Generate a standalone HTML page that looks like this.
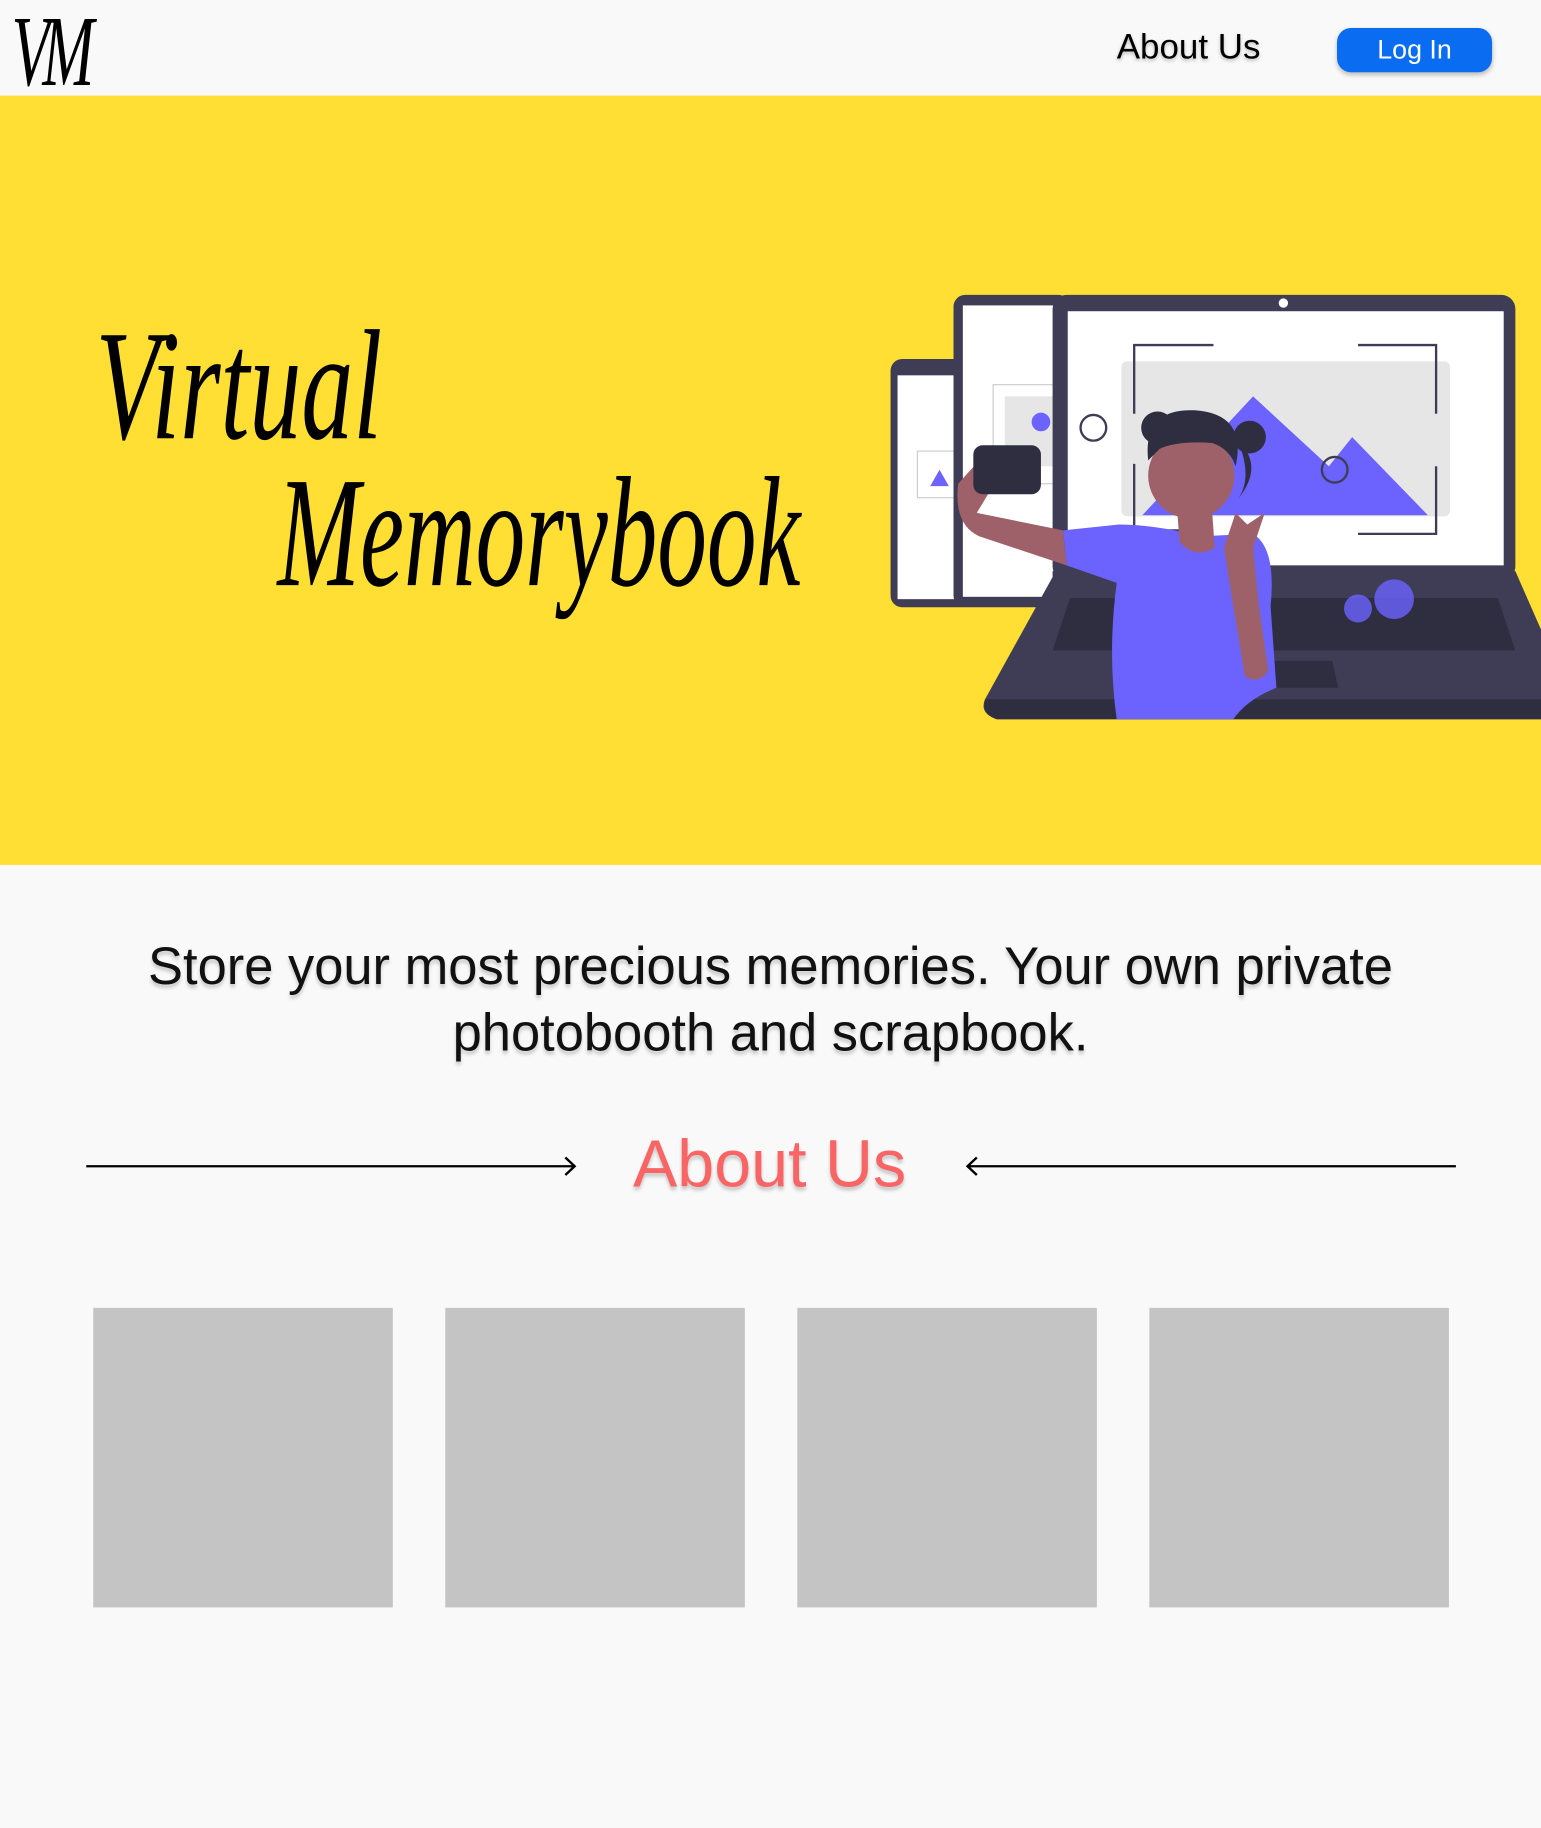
<!DOCTYPE html>
<html><head><meta charset="utf-8"><style>
html,body{margin:0;padding:0;background:#f9f9f9;overflow:hidden}
body{width:1541px;height:1828px;position:relative}
#w{position:absolute;left:0;top:0;width:1322px;height:1568px;transform:scale(1.16566);transform-origin:0 0;font-family:"Liberation Sans",sans-serif}
.a{position:absolute}
.script{font-family:"Liberation Serif",serif;font-style:italic;color:#000;transform-origin:0 0;white-space:nowrap}
.box{position:absolute;top:1122px;width:257px;height:257px;background:#c4c4c4}
</style></head><body><div id="w">
<div class="a script" style="left:10px;top:-6px;font-size:86px;transform:scaleX(0.62);letter-spacing:-10px;">VM</div>
<div class="a" style="left:958px;top:24px;font-size:30px;color:#000;text-shadow:0 2px 3px rgba(0,0,0,.25)">About Us</div>
<div class="a" style="left:1147px;top:24px;width:133px;height:38px;border-radius:12px;background:#0a6cf0;color:#fff;font-size:23px;line-height:36px;text-align:center;box-shadow:0 2px 4px rgba(0,0,0,.25)">Log In</div>
<div class="a" style="left:0;top:82px;width:1322px;height:660px;background:#ffdf34"></div>
<div class="a script" style="left:82px;top:262px;font-size:135px;line-height:140px;transform:scaleX(0.66)">Virtual</div>
<div class="a script" style="left:238px;top:388px;font-size:135px;line-height:140px;transform:scaleX(0.63)">Memorybook</div>
<svg class="a" style="left:760px;top:250px" width="562" height="370" viewBox="760 250 562 370">
<rect x="764" y="308" width="72" height="213" rx="10" fill="#3f3d56"/><rect x="770" y="322" width="60" height="192" fill="#fff"/>
<rect x="787" y="387" width="35" height="40" fill="none" stroke="#ccc"/><path d="M798 417l8-14 8 14z" fill="#6c63ff"/>
<rect x="818" y="253" width="100" height="268" rx="10" fill="#3f3d56"/><rect x="826" y="262" width="85" height="250" fill="#fff"/>
<rect x="852" y="330" width="55" height="85" fill="none" stroke="#ccc"/><rect x="862" y="340" width="45" height="60" fill="#e6e6e6"/><circle cx="893" cy="362" r="8" fill="#6c63ff"/>
<path d="M903 490H1300L1322 540V617H855Q840 612 845 600L903 495Z" fill="#3f3d56"/>
<path d="M845 600H1322V617H855Q842 612 845 600Z" fill="#2f2e41"/>
<path d="M918 513H1285L1300 558H903Z" fill="#2f2e41"/>
<path d="M1090 567H1143L1148 590H1095Z" fill="#2f2e41"/>
<rect x="903" y="253" width="397" height="245" rx="12" fill="#3f3d56"/><rect x="916" y="267" width="374" height="218" fill="#fff"/>
<circle cx="1101" cy="260" r="4" fill="#fff"/>
<rect x="962" y="310" width="282" height="133" rx="5" fill="#e6e6e6"/>
<path d="M980 442L1075 340L1140 400L1160 375L1225 442Z" fill="#6c63ff"/>
<circle cx="1145" cy="403" r="11" fill="none" stroke="#3f3d56" stroke-width="2"/>
<circle cx="938" cy="367" r="11" fill="none" stroke="#3f3d56" stroke-width="2"/>
<path d="M973 355V296H1041M1165 296H1232V355M973 398V455H1041M1165 458H1232V400" fill="none" stroke="#3f3d56" stroke-width="2"/>
<circle cx="1165" cy="522" r="12" fill="#6c63ff" opacity=".8"/><circle cx="1196" cy="514" r="17" fill="#6c63ff" opacity=".8"/>
<path d="M912 455L960 450Q990 450 1030 460L1075 458Q1095 470 1090 520L1095 590Q1070 600 1058 617H958Q950 560 958 500L915 485Z" fill="#6c63ff"/>
<path d="M822 415L840 395L850 420L838 440L912 455L915 485L840 460Q818 450 822 415Z" fill="#9e616a"/>
<path d="M1050 470L1060 440L1070 450L1085 440L1075 470L1080 520L1088 575Q1080 588 1068 580L1058 520Z" fill="#9e616a"/>
<rect x="835" y="382" width="58" height="42" rx="8" fill="#2f2e41"/>
<path d="M1010 440L1040 440L1042 470Q1025 480 1012 465Z" fill="#9e616a"/>
<circle cx="1022" cy="408" r="37" fill="#9e616a"/>
<path d="M985 395Q980 350 1025 352Q1070 355 1060 400Q1055 385 1040 380Q1010 378 995 385Z M1062 428Q1085 400 1062 378Q1075 410 1062 428Z" fill="#2f2e41"/>
<circle cx="993" cy="367" r="14" fill="#2f2e41"/><circle cx="1072" cy="375" r="14" fill="#2f2e41"/>
</svg>
<div class="a" style="left:0;top:800px;width:1322px;text-align:center;font-size:45px;line-height:57px;color:#111;text-shadow:0 3px 3px rgba(0,0,0,.2)">Store your most precious memories. Your own private<br>photobooth and scrapbook.</div>
<svg class="a" style="left:0;top:985px" width="1322" height="30"><path d="M74 15.5H493M485 8l8 7.5-8 7.5M1249 15.5H830M838 8l-8 7.5 8 7.5" fill="none" stroke="#000" stroke-width="2"/></svg>
<div class="a" style="left:543px;top:966px;font-size:57px;color:#f96565;text-shadow:0 3px 3px rgba(0,0,0,.2)">About Us</div>
<div class="box" style="left:80px"></div><div class="box" style="left:382px"></div><div class="box" style="left:684px"></div><div class="box" style="left:986px"></div>
</div></body></html>
